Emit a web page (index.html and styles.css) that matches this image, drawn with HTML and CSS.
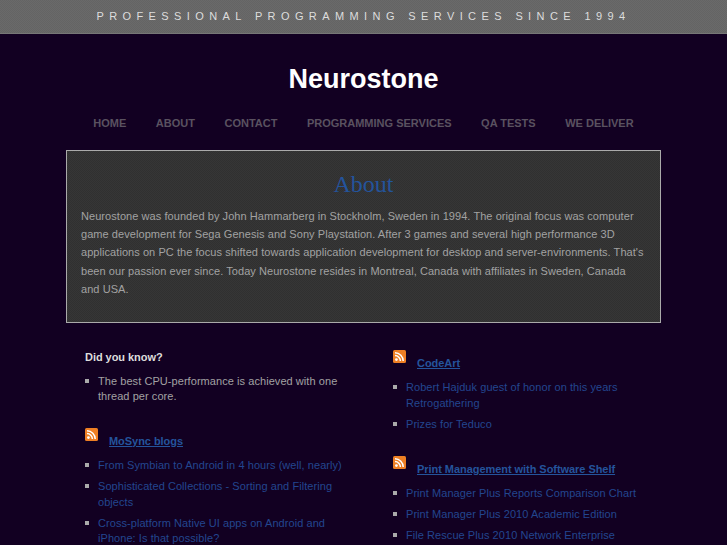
FILE: index.html
```html
<!DOCTYPE html>
<html lang="en">
<head>
<meta charset="utf-8">
<title>Neurostone</title>
<link rel="stylesheet" href="styles.css">
</head>
<body>
<div class="topbar">PROFESSIONAL PROGRAMMING SERVICES SINCE 1994</div>
<h1 class="logo">Neurostone</h1>
<nav class="nav">
  <a href="#">HOME</a><a href="#">ABOUT</a><a href="#">CONTACT</a><a href="#">PROGRAMMING SERVICES</a><a href="#">QA TESTS</a><a href="#">WE DELIVER</a>
</nav>
<section class="hero">
  <h2>About</h2>
  <p>Neurostone was founded by John Hammarberg in Stockholm, Sweden in 1994. The original focus was computer game development for Sega Genesis and Sony Playstation. After 3 games and several high performance 3D applications on PC the focus shifted towards application development for desktop and server-environments. That's been our passion ever since. Today Neurostone resides in Montreal, Canada with affiliates in Sweden, Canada and USA.</p>
</section>
<div class="columns">
  <div class="col">
    <h3 class="plain">Did you know?</h3>
    <ul><li>The best CPU-performance is achieved with one thread per core.</li></ul>
    <h3 class="feed"><svg class="rss" viewBox="0 0 13 13"><rect width="13" height="13" rx="1.5" fill="#ee7f24"/><circle cx="3.4" cy="9.6" r="1.4" fill="#fff"/><path d="M2 5.6a5.4 5.4 0 0 1 5.4 5.4M2 2.8A8.2 8.2 0 0 1 10.2 11" fill="none" stroke="#fff" stroke-width="1.5"/></svg><a href="#">MoSync blogs</a></h3>
    <ul>
      <li><a href="#">From Symbian to Android in 4 hours (well, nearly)</a></li>
      <li><a href="#">Sophisticated Collections - Sorting and Filtering objects</a></li>
      <li><a href="#">Cross-platform Native UI apps on Android and iPhone: Is that possible?</a></li>
    </ul>
  </div>
  <div class="col">
    <h3 class="feed first"><svg class="rss" viewBox="0 0 13 13"><rect width="13" height="13" rx="1.5" fill="#ee7f24"/><circle cx="3.4" cy="9.6" r="1.4" fill="#fff"/><path d="M2 5.6a5.4 5.4 0 0 1 5.4 5.4M2 2.8A8.2 8.2 0 0 1 10.2 11" fill="none" stroke="#fff" stroke-width="1.5"/></svg><a href="#">CodeArt</a></h3>
    <ul>
      <li><a href="#">Robert Hajduk guest of honor on this years Retrogathering</a></li>
      <li><a href="#">Prizes for Teduco</a></li>
    </ul>
    <h3 class="feed"><svg class="rss" viewBox="0 0 13 13"><rect width="13" height="13" rx="1.5" fill="#ee7f24"/><circle cx="3.4" cy="9.6" r="1.4" fill="#fff"/><path d="M2 5.6a5.4 5.4 0 0 1 5.4 5.4M2 2.8A8.2 8.2 0 0 1 10.2 11" fill="none" stroke="#fff" stroke-width="1.5"/></svg><a href="#">Print Management with Software Shelf</a></h3>
    <ul>
      <li><a href="#">Print Manager Plus Reports Comparison Chart</a></li>
      <li><a href="#">Print Manager Plus 2010 Academic Edition</a></li>
      <li><a href="#">File Rescue Plus 2010 Network Enterprise</a></li>
    </ul>
  </div>
</div>
</body>
</html>
```
FILE: styles.css
```css
html, body { margin: 0; padding: 0; height: 545px; overflow: hidden; }
body { background: #120022; font-family: "Liberation Sans", Arial, sans-serif; color: #a2a2a2; font-size: 11px; }
.topbar { height: 33px; line-height: 32px; background: repeating-conic-gradient(#6a6a6a 0 25%, #646464 0 50%) 0 0 / 2px 2px; border-bottom: 1px solid #777; color: #ddd; font-size: 11px; letter-spacing: 5.4px; text-align: center; }
.logo { margin: 28px 0 0; font-size: 27px; line-height: 34px; color: #fff; text-align: center; font-weight: bold; }
.nav { display: flex; justify-content: center; gap: 29.5px; margin-top: 19px; line-height: 16px; }
.nav a { color: #5a5260; font-size: 11px; font-weight: bold; text-decoration: none; }
.hero { box-sizing: border-box; width: 595px; height: 173px; margin: 19px 0 0 66px; background: repeating-conic-gradient(#363636 0 25%, #303030 0 50%) 0 0 / 2px 2px; border: 1px solid #aaa; padding: 19px 14px 0; }
.hero h2 { margin: 0; font-family: "Liberation Serif", serif; font-weight: normal; font-size: 24px; line-height: 28px; color: #24549c; text-align: center; }
.hero p { margin: 9px 0 0; line-height: 18.2px; font-size: 11px; letter-spacing: 0.06px; }
.columns { display: grid; grid-template-columns: 270px 270px; column-gap: 38px; margin: 26px 0 0 85px; }
.col { min-width: 0; }
h3 { margin: 0; font-size: 11px; line-height: 16px; color: #ddd; letter-spacing: -0.05px; }
.plain { height: 17px; }
.plain + ul li { line-height: 15px; }
.feed { display: flex; align-items: flex-end; margin-top: 24px; height: 21px; padding-bottom: 1px; }
.feed.first { margin-top: 1px; }
.rss { width: 13px; height: 13px; margin-right: 11px; flex: none; align-self: flex-start; }
.feed a { color: #24549c; }
ul { list-style: none; margin: 8px 0 0; padding: 0; }
li { position: relative; padding-left: 13px; line-height: 15.5px; margin-bottom: 5.5px; font-size: 11px; letter-spacing: 0.06px; }
li::before { content: ""; position: absolute; left: 0; top: 5px; width: 4px; height: 4px; background: #aaa; }
li a { color: #22468f; text-decoration: none; }
```
